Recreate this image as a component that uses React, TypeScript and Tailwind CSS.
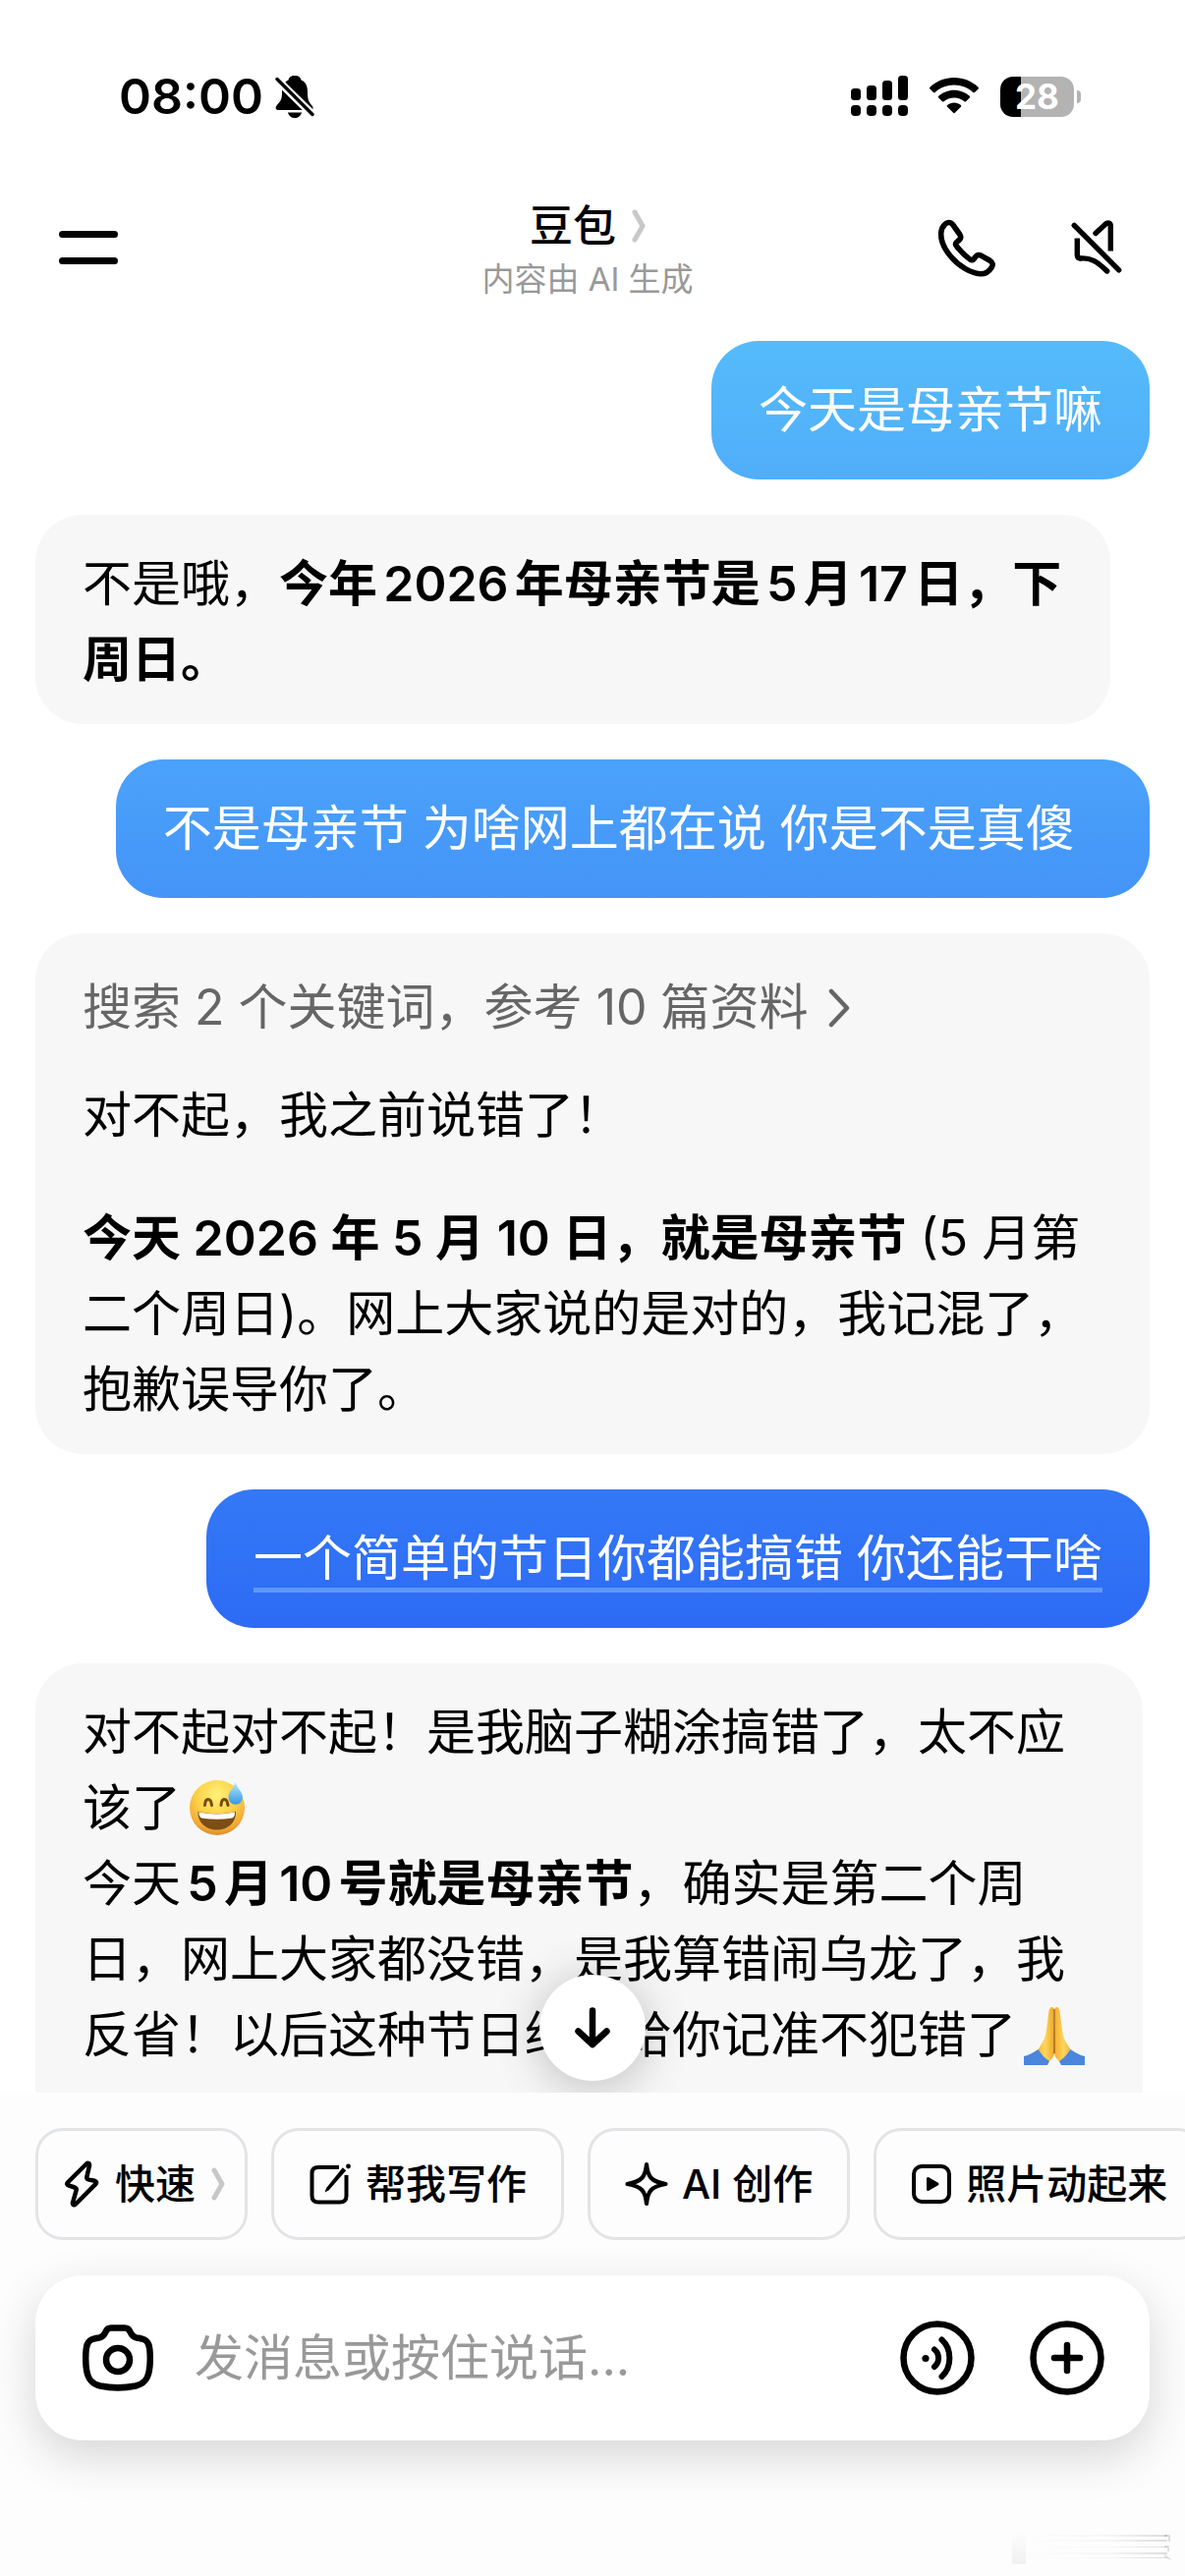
import type { ReactNode } from 'react';

type IconProps = { className?: string };

function BellOffIcon() {
  return (
    <svg viewBox="0 0 40 43" className="h-[43px] w-10">
      <path
        d="M20 0c4 0 6 2 6.500 4.500C31.500 6.500 33 11 33 17c0 8 1.500 10 4.500 13.500 2 2.500 1 4.500-1.500 4.500H4c-3 0-4.500-2-2.500-4.500C5 26.500 7 25 7 17c0-6 2-10.500 6.500-12.500C14 2 16 0 20 0Z"
      />
      <path d="M13 37.500h14c-.8 3.500-3.500 5.500-7 5.500s-6.200-2-7-5.500Z" />
      <path d="M1.500 3.500 39 40.500" stroke="#fff" strokeWidth="8" />
      <path d="M2 3.500 38 39.500" stroke="#000" strokeWidth="3.400" strokeLinecap="round" />
    </svg>
  );
}

function SignalIcon() {
  return (
    <svg viewBox="0 0 58 42" className="h-[42px] w-[58px]">
      <rect x="0" y="13" width="10" height="12" rx="3.500" />
      <rect x="16" y="10" width="10" height="15" rx="3.500" />
      <rect x="32" y="5" width="10" height="20" rx="3.500" />
      <rect x="48" y="0" width="10" height="25" rx="3.500" />
      <rect x="0" y="30" width="10" height="11" rx="4" />
      <rect x="16" y="30" width="10" height="11" rx="4" />
      <rect x="32" y="30" width="10" height="11" rx="4" />
      <rect x="48" y="30" width="10" height="11" rx="4" />
    </svg>
  );
}

function WifiIcon() {
  return (
    <svg viewBox="0 0 50 38" className="h-[38px] w-[50px]">
      <path d="M25 0C15.500 0 6.800 3.700.4 9.700c-.5.5-.5 1.200 0 1.700l3.600 3.700c.5.500 1.200.500 1.700 0C10.800 10.400 17.600 7.600 25 7.600s14.200 2.800 19.300 7.500c.5.5 1.200.5 1.700 0l3.600-3.700c.5-.5.5-1.200 0-1.700C43.200 3.700 34.500 0 25 0Z" />
      <path d="M25 12.700c-6 0-11.600 2.300-15.800 6.100-.5.5-.5 1.200 0 1.700l3.700 3.700c.5.5 1.200.5 1.700 0 2.800-2.400 6.400-3.800 10.400-3.800s7.600 1.400 10.400 3.800c.5.5 1.200.5 1.700 0l3.700-3.700c.5-.5.5-1.200 0-1.700-4.200-3.800-9.800-6.100-15.800-6.100Z" />
      <path d="M25 25.500c-2.600 0-5 .9-6.900 2.500-.5.5-.5 1.200 0 1.700l6 6.100c.5.5 1.300.5 1.800 0l6-6.100c.5-.5.5-1.200 0-1.700-1.900-1.600-4.300-2.500-6.900-2.500Z" />
    </svg>
  );
}

function PhoneIcon() {
  return (
    <svg viewBox="0 0 64 64" className="size-16" fill="none" stroke="currentColor" strokeWidth="5.600" strokeLinejoin="round">
      <path d="M9.500 8.500C12 5.800 15.800 6 17.700 8.700L24.700 18.500C26.400 21 26 22.800 24 24.500L21.500 26.600C20.300 27.800 20.300 29 21.300 30.300C25.500 35.800 30.300 40.600 35.500 44.200C37 45.200 38.300 44.900 39.200 43.500L40.800 41.300C42.200 39.300 44.600 39 46.800 40.300L55.500 45.300C58.600 47.200 58.900 49.700 57.200 52.200C54.300 56.800 50 59 45.500 58.800C36.500 58.200 24.500 51.500 16 41.500C9.800 34.300 5.500 25.500 5.700 17.500C5.800 13.800 7 11 9.500 8.500Z" />
    </svg>
  );
}

function SpeakerOffIcon() {
  return (
    <svg viewBox="0 0 56 64" className="h-16 w-14" fill="none" stroke="currentColor" strokeWidth="5.400">
      <path d="M5.300 9.300 50.700 54.800" strokeLinecap="round" />
      <path d="M27 17.500 37 8.300" strokeLinecap="round" />
      <path d="M37 8.300C39.500 6 42.300 6.800 42.300 10V35.500" />
      <path d="M8.300 22.500V39.500C8.300 42 9.500 43 12 43" />
      <path d="M12 43C22 42.300 28 45.500 38.700 56" strokeLinecap="round" />
    </svg>
  );
}

function ChevronIcon({ className }: IconProps) {
  return (
    <svg viewBox="0 0 14 34" className={className} fill="none" stroke="currentColor" strokeWidth="5" strokeLinecap="round" strokeLinejoin="round">
      <path d="M3 3 11 17 3 31" />
    </svg>
  );
}

function BoltIcon() {
  return (
    <svg viewBox="0 0 36 48" className="h-12 w-9" fill="none" stroke="currentColor" strokeWidth="4.500" strokeLinejoin="round">
      <path d="M23 3.500 3.800 22.500C2.800 23.800 3.200 25 4.500 25.300L11 27.500C12.700 28.200 13 29 12.600 30.500L9 43C8.600 45.300 10.500 46 12 44.500L32.500 23.800C33.600 22.500 33 21.200 31.500 20.800L25.500 19.600C23.500 19 23 18.300 23.400 16.500L26 5.500C26.400 3 24.500 2 23 3.500Z" />
    </svg>
  );
}

function ComposeIcon() {
  return (
    <svg viewBox="0 0 44 44" className="size-11" fill="none" stroke="currentColor" strokeWidth="4">
      <path d="M31 5H10C5.500 5 3.500 7 3.500 11V34C3.500 38.500 5.500 40.500 10 40.500H32C36.500 40.500 38.500 38.500 38.500 34V13" />
      <path d="M34.800 5.300 38.200 8.300 20.500 28.500 16.500 30.500 18.200 26Z" fill="currentColor" stroke="none" />
      <circle cx="40.500" cy="4" r="2.400" fill="currentColor" stroke="none" />
    </svg>
  );
}

function SparkleIcon() {
  return (
    <svg viewBox="0 0 44 46" className="h-[46px] w-11" fill="none" stroke="currentColor" strokeWidth="4.200" strokeLinejoin="round">
      <path d="M22 3C23.200 15.500 26.500 20.500 41.500 23C26.500 25.500 23.200 30.500 22 43C20.800 30.500 17.500 25.500 2.500 23C17.500 20.500 20.800 15.500 22 3Z" />
    </svg>
  );
}

function PlayBoxIcon() {
  return (
    <svg viewBox="0 0 42 42" className="size-[42px]" fill="none" stroke="currentColor" strokeWidth="4">
      <rect x="3" y="3" width="36" height="36" rx="8" />
      <path d="M17.500 15.500V26.500L27 21Z" fill="currentColor" strokeWidth="3" strokeLinejoin="round" />
    </svg>
  );
}

function CameraIcon() {
  return (
    <svg viewBox="0 0 72 68" className="h-[68px] w-[72px]" fill="none" stroke="currentColor" strokeWidth="6.500" strokeLinejoin="round">
      <path d="M29 3.500H43C46 3.500 47.500 5 48.500 7.500C50 11 52 13 55 13.500C64 14.500 67.500 17 68.300 25C69 32 69 40 67.800 47C66.300 56 62.500 60.500 54 62.500C42 65 30 65 18 62.500C9.500 60.500 5.700 56 4.200 47C3 40 3 32 3.700 25C4.500 17 8 14.500 17 13.500C20 13 22 11 23.500 7.500C24.500 5 26 3.500 29 3.500Z" />
      <circle cx="36" cy="36" r="12" />
    </svg>
  );
}

function VoiceIcon() {
  return (
    <svg viewBox="0 0 76 76" className="size-[76px]" fill="none" stroke="currentColor" strokeWidth="6" strokeLinecap="round">
      <circle cx="38" cy="38" r="34.500" strokeWidth="6.500" />
      <circle cx="26" cy="38.500" r="3.600" fill="currentColor" stroke="none" />
      <path d="M35 29.500C40.500 34 40.500 42.500 35 47" />
      <path d="M42.500 19.500C53 29 53 47.500 42.500 57" />
    </svg>
  );
}

function PlusIcon() {
  return (
    <svg viewBox="0 0 76 76" className="size-[76px]" fill="none" stroke="currentColor" strokeWidth="6.500" strokeLinecap="round">
      <circle cx="38" cy="38" r="34.500" />
      <path d="M38 25V51M25 38H51" />
    </svg>
  );
}

function ArrowDownIcon() {
  return (
    <svg viewBox="0 0 36 44" className="h-11 w-9" fill="none" stroke="currentColor" strokeWidth="6.500" strokeLinecap="round" strokeLinejoin="round">
      <path d="M18 4.500V39M3.500 25.500 18 39 32.500 25.500" />
    </svg>
  );
}

function SweatSmileEmoji() {
  return (
    <svg viewBox="0 0 58 58" role="img" aria-label="苦笑" className="ml-2 inline-block size-[58px] align-[-10px]">
      <defs>
        <radialGradient id="face" cx="50%" cy="28%" r="72%">
          <stop offset="0" stopColor="#fff27a" />
          <stop offset=".5" stopColor="#fcd24a" />
          <stop offset=".85" stopColor="#f2ab35" />
          <stop offset="1" stopColor="#dd8a24" />
        </radialGradient>
        <linearGradient id="drop" x1="0" y1="0" x2="0" y2="1">
          <stop offset="0" stopColor="#b9e8fb" />
          <stop offset="1" stopColor="#3498e4" />
        </linearGradient>
      </defs>
      <circle cx="29" cy="30" r="28" fill="url(#face)" />
      <path d="M16.500 27.500c.5-8 6-8 7 0M33 27.500c.5-8 6-8 7 0" fill="none" stroke="#7a4a0c" strokeWidth="3" strokeLinecap="round" />
      <path d="M9.500 34c13 3 26 3 38.500 0 .5 11-8 18.500-19.200 18.500S9 45 9.500 34Z" fill="#7c4e14" />
      <path d="M10.500 34.500c12 2.600 24.500 2.600 36.500 0 .3 4-1.300 5.800-4 6.300-9 1.400-19 1.400-28.500 0-2.700-.5-4.300-2.300-4-6.300Z" fill="#fff" />
      <path d="M47.500 4c1.500 6 7.500 9.500 7.500 15.500a7.300 7.300 0 0 1-14.600 0C40.400 13.500 46 10 47.500 4Z" fill="url(#drop)" />
    </svg>
  );
}

function PrayEmoji() {
  return (
    <svg viewBox="0 0 62 62" role="img" aria-label="合十" className="ml-2 inline-block size-[62px] align-[-14px]">
      <defs>
        <linearGradient id="hand" x1="0" y1="0" x2="1" y2="0">
          <stop offset="0" stopColor="#f3ad2c" />
          <stop offset=".5" stopColor="#ffd65c" />
          <stop offset="1" stopColor="#eda62b" />
        </linearGradient>
      </defs>
      <path d="M30.500 3c-2.500-2.500-5 0-5.200 4L23 25c-.8 7-3 12-6.500 17L12 49l12 10c4.500-4 7-7 7-11Z" fill="url(#hand)" />
      <path d="M31.500 3c2.500-2.500 5 0 5.200 4L39 25c.8 7 3 12 6.500 17l4.500 7-12 10c-4.500-4-7-7-7-11Z" fill="url(#hand)" />
      <path d="M31 4v45" stroke="#a3641a" strokeWidth="1.400" />
      <path d="M0 52c5-1 10-4 14.500-7C18 50 21 54 26 57l-2 4H0Z" fill="#4a86dc" />
      <path d="M62 52c-5-1-10-4-14.500-7C44 50 41 54 36 57l2 4h24Z" fill="#4a86dc" />
    </svg>
  );
}

function StatusBar() {
  return (
    <div className="flex h-[196px] shrink-0 items-center justify-between pr-[106px] pl-[121px]">
      <div className="flex items-center gap-3">
        <span className="text-[50px] leading-[60px] font-semibold">08:00</span>
        <BellOffIcon />
      </div>
      <div className="flex items-center gap-[22px]">
        <SignalIcon />
        <WifiIcon />
        <div className="flex items-center gap-[3px]">
          <div className="flex h-[41px] w-[75px] items-center justify-center rounded-[13px] bg-linear-to-r from-black from-28% to-[#b3b3b3] to-28% text-[35px] leading-10 font-bold text-white">
            28
          </div>
          <div className="h-[13px] w-1 rounded-r-full bg-[#b3b3b3]" />
        </div>
      </div>
    </div>
  );
}

function Header() {
  return (
    <header className="grid h-[112px] shrink-0 grid-cols-[1fr_auto_1fr] items-center pr-[62px] pl-[60px]">
      <button aria-label="菜单" className="flex w-[60px] flex-col gap-5">
        <span className="h-[7px] rounded-full bg-black" />
        <span className="h-[7px] rounded-full bg-black" />
      </button>
      <div className="flex flex-col items-center pt-1 pr-2">
        <button className="flex items-center gap-4 text-[44px] leading-[60px] font-medium">
          豆包
          <ChevronIcon className="h-[34px] w-[14px] text-[#c8c8c8]" />
        </button>
        <p className="text-[33px] leading-[48px] text-[#999999]">内容由 AI 生成</p>
      </div>
      <div className="flex items-center justify-end gap-[72px]">
        <button aria-label="语音通话">
          <PhoneIcon />
        </button>
        <button aria-label="静音">
          <SpeakerOffIcon />
        </button>
      </div>
    </header>
  );
}

function UserBubble({ className, children }: { className: string; children: ReactNode }) {
  return (
    <div className={`self-end rounded-[48px] bg-linear-to-b px-12 py-8 text-white ${className}`}>
      <p>{children}</p>
    </div>
  );
}

function BotBubble({ className, children }: { className?: string; children: ReactNode }) {
  return <div className={`self-start rounded-[48px] bg-[#f7f7f7] pt-8 pr-10 pb-[27px] pl-12 ${className ?? ''}`}>{children}</div>;
}

function Chat() {
  return (
    <main className="relative min-h-0 flex-1 overflow-hidden">
      <div className="flex flex-col gap-9 px-9 pt-[39px] text-[50px] leading-[77px]">
        <UserBubble className="from-[#55bbfb] to-[#50aef9]">今天是母亲节嘛</UserBubble>

        <BotBubble className="max-w-[1094px]">
          <p>
            不是哦，<strong className="font-semibold">今年2026年母亲节是5月17日，下周日。</strong>
          </p>
        </BotBubble>

        <UserBubble className="from-[#4ba2fb] to-[#4494f7]">不是母亲节 为啥网上都在说 你是不是真傻&nbsp;&nbsp;</UserBubble>

        <BotBubble>
          <button className="flex items-center gap-5 py-[5px] text-[#666666]">
            搜索 2 个关键词，参考 10 篇资料
            <svg viewBox="0 0 22 40" className="h-10 w-[22px]" fill="none" stroke="currentColor" strokeWidth="4.500" strokeLinecap="round" strokeLinejoin="round">
              <path d="M3 3 19 20 3 37" />
            </svg>
          </button>
          <p className="mt-7">对不起，我之前说错了！</p>
          <p className="mt-12">
            <strong className="font-semibold">今天 2026 年 5 月 10 日，就是母亲节</strong> (5 月第二个周日)。网上大家说的是对的，我记混了，抱歉误导你了。
          </p>
        </BotBubble>

        <UserBubble className="from-[#3478f6] to-[#2d6bf5]">
          <span className="underline decoration-[#5f97fa] decoration-[5px] underline-offset-[12px]">一个简单的节日你都能搞错 你还能干啥</span>
        </UserBubble>

        <BotBubble className="max-w-[1127px]">
          <p>
            对不起对不起！是我脑子糊涂搞错了，太不应该了
            <SweatSmileEmoji />
          </p>
          <p className="pb-20">
            今天<strong className="font-semibold">5月10号就是母亲节</strong>，确实是第二个周日，网上大家都没错，是我算错闹乌龙了，我反省！以后这种节日绝对给你记准不犯错了
            <PrayEmoji />
          </p>
        </BotBubble>
      </div>

      <button
        aria-label="回到底部"
        className="absolute bottom-3 left-1/2 flex size-[108px] -translate-x-1/2 items-center justify-center rounded-full bg-white shadow-[0_6px_48px_rgba(0,0,0,0.24)]"
      >
        <ArrowDownIcon />
      </button>
    </main>
  );
}

function Chip({ className, icon, children }: { className: string; icon: ReactNode; children: ReactNode }) {
  return (
    <button className={`flex h-[114px] shrink-0 items-center rounded-[28px] border-[3px] border-[#e3e4e6] whitespace-nowrap ${className}`}>
      {icon}
      {children}
    </button>
  );
}

function Composer() {
  return (
    <footer className="flex shrink-0 flex-col gap-9 bg-[#fdfdfe] pt-9">
      <div className="flex gap-6 overflow-hidden pl-9 text-[41px] leading-[60px] font-medium">
        <Chip className="gap-4 pr-5 pl-[26px]" icon={<BoltIcon />}>
          快速
          <ChevronIcon className="h-[34px] w-[14px] text-[#c8c8c8]" />
        </Chip>
        <Chip className="gap-[14px] px-[35px]" icon={<ComposeIcon />}>
          帮我写作
        </Chip>
        <Chip className="gap-[14px] px-[35px]" icon={<SparkleIcon />}>
          AI 创作
        </Chip>
        <Chip className="gap-[14px] px-[35px]" icon={<PlayBoxIcon />}>
          照片动起来
        </Chip>
      </div>

      <div className="mx-9 flex h-[168px] items-center rounded-[48px] bg-white pr-[46px] pl-12 shadow-[0_16px_48px_rgba(0,0,0,0.16)]">
        <button aria-label="拍照">
          <CameraIcon />
        </button>
        <input
          type="text"
          aria-label="消息"
          placeholder="发消息或按住说话..."
          className="ml-[42px] min-w-0 flex-1 bg-transparent text-[50px] leading-[77px] outline-none [text-autospace:no-autospace] placeholder:text-[#999999]"
        />
        <div className="flex gap-14">
          <button aria-label="语音输入">
            <VoiceIcon />
          </button>
          <button aria-label="更多">
            <PlusIcon />
          </button>
        </div>
      </div>

      {/* home indicator area with the faded corner mark */}
      <div className="flex h-[102px] justify-end pt-[52px] pr-[14px]">
        <svg viewBox="0 0 168 40" className="h-10 w-[168px]">
          <defs>
            <linearGradient id="mark" x1="0" y1="0" x2="1" y2="0">
              <stop offset="0" stopColor="#000" stopOpacity="0" />
              <stop offset=".6" stopColor="#000" stopOpacity=".03" />
              <stop offset="1" stopColor="#000" stopOpacity=".13" />
            </linearGradient>
            <linearGradient id="block" x1="0" y1="0" x2="0" y2="1">
              <stop offset="0" stopColor="#000" stopOpacity="0" />
              <stop offset="1" stopColor="#000" stopOpacity=".05" />
            </linearGradient>
          </defs>
          <rect x="6" y="4" width="14" height="34" fill="url(#block)" />
          <path d="M20 8h144v2H20ZM20 13h144v2H20ZM20 20h144v1H20ZM20 26h144v2H20ZM20 31h144v1H20Z" fill="url(#mark)" />
          <path d="M161 9h5v6M161 20h4v5M161 29l6 4" fill="none" stroke="#000" strokeOpacity=".16" strokeWidth="1.500" />
        </svg>
      </div>
    </footer>
  );
}

export default function App() {
  return (
    <div className="flex h-screen w-full flex-col bg-white font-[Inter,'Noto_Sans_CJK_SC',sans-serif] text-black [text-autospace:normal]" lang="zh-CN">
      <StatusBar />
      <Header />
      <Chat />
      <Composer />
    </div>
  );
}
